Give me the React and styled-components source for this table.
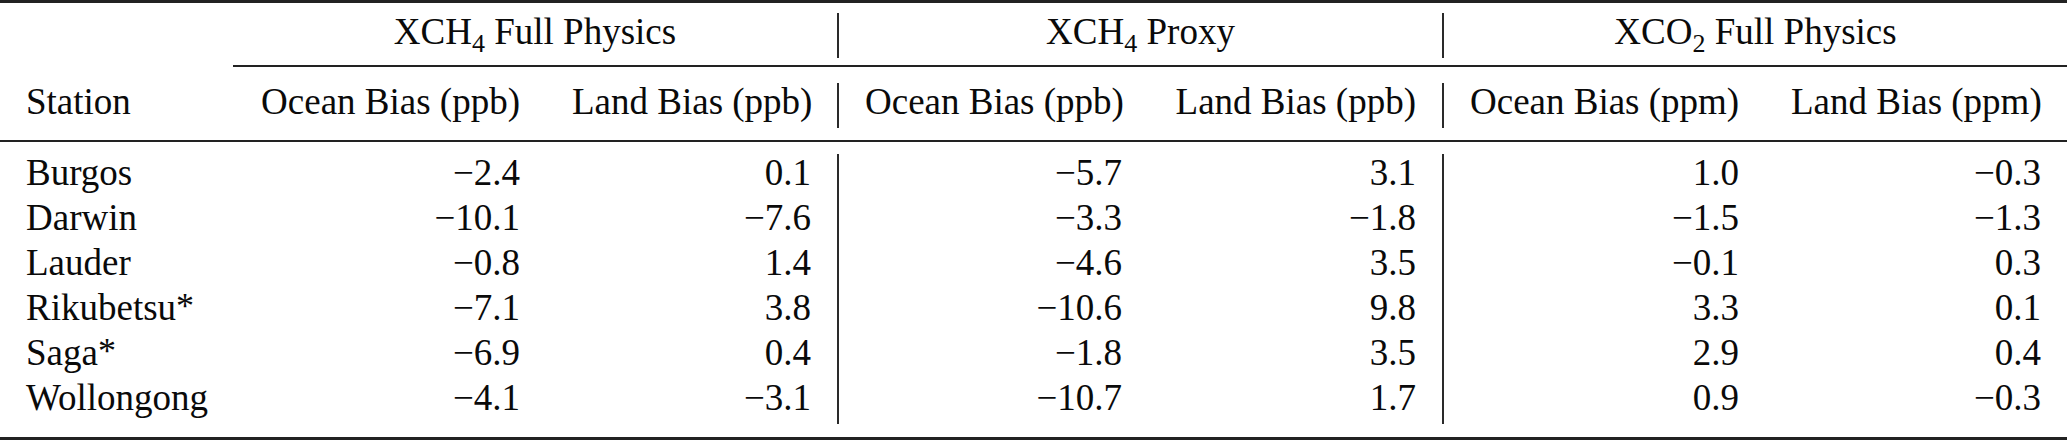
import React from "react";
import styled, { createGlobalStyle } from "styled-components";

const GlobalStyle = createGlobalStyle`
    html, body {
        margin: 0;
        padding: 0;
        background: #ffffff;
    }
    body {
        font-family: "Liberation Serif", "Times New Roman", serif;
        color: #0a0a0a;
    }
`;

const groups = [
    { base: "XCH", sub: "4", rest: " Full Physics" },
    { base: "XCH", sub: "4", rest: " Proxy" },
    { base: "XCO", sub: "2", rest: " Full Physics" },
];

const headers = [
    "Ocean Bias (ppb)",
    "Land Bias (ppb)",
    "Ocean Bias (ppb)",
    "Land Bias (ppb)",
    "Ocean Bias (ppm)",
    "Land Bias (ppm)",
];

const stations = [
    { name: "Burgos", star: false, values: ["−2.4", "0.1", "−5.7", "3.1", "1.0", "−0.3"] },
    { name: "Darwin", star: false, values: ["−10.1", "−7.6", "−3.3", "−1.8", "−1.5", "−1.3"] },
    { name: "Lauder", star: false, values: ["−0.8", "1.4", "−4.6", "3.5", "−0.1", "0.3"] },
    { name: "Rikubetsu", star: true, values: ["−7.1", "3.8", "−10.6", "9.8", "3.3", "0.1"] },
    { name: "Saga", star: true, values: ["−6.9", "0.4", "−1.8", "3.5", "2.9", "0.4"] },
    { name: "Wollongong", star: false, values: ["−4.1", "−3.1", "−10.7", "1.7", "0.9", "−0.3"] },
];

// a vertical rule sits before columns 4 and 6 (index 2 and 4 of the values)
const hasDivider = (i) => i === 2 || i === 4;

export default function App() {
    return (
        <>
            <GlobalStyle />
            <Table>
                <Rule $thick />
                <GridRow $top={10}>
                    <Cell />
                    {groups.map((g, i) => (
                        <GroupCell key={i} $divider={i > 0}>
                            {g.base}
                            <Sub>{g.sub}</Sub>
                            {g.rest}
                        </GroupCell>
                    ))}
                </GridRow>
                <Rule $top={7} $inset={233} />
                <GridRow $top={16}>
                    <Cell>Station</Cell>
                    {headers.map((h, i) => (
                        <Cell key={i} $right $divider={hasDivider(i)}>
                            {h}
                        </Cell>
                    ))}
                </GridRow>
                <Rule $top={12} />
                <Body>
                    {stations.map((s) => (
                        <GridRow key={s.name}>
                            <Cell>
                                {s.name}
                                {s.star && <Star>*</Star>}
                            </Cell>
                            {s.values.map((v, i) => (
                                <Cell key={i} $right $divider={hasDivider(i)}>
                                    {v}
                                </Cell>
                            ))}
                        </GridRow>
                    ))}
                </Body>
                <Rule $thick $top={13} />
            </Table>
        </>
    );
}

const Table = styled.div`
    width: 2067px;
    display: flex;
    flex-direction: column;
    font-size: 37px;
`;

const Rule = styled.div`
    height: ${(p) => (p.$thick ? 3 : 2)}px;
    margin-top: ${(p) => p.$top || 0}px;
    margin-left: ${(p) => p.$inset || 0}px;
    background-color: #222222;
`;

const GridRow = styled.div`
    display: grid;
    grid-template-columns: 233px 313px 291px 311px 294px 323px 302px;
    height: 45px;
    margin-top: ${(p) => p.$top || 0}px;
`;

const Body = styled.div`
    margin-top: 12px;
    display: flex;
    flex-direction: column;
`;

const Cell = styled.div`
    box-sizing: border-box;
    height: 45px;
    padding: 0 26px;
    line-height: 38px;
    white-space: nowrap;
    text-align: ${(p) => (p.$right ? "right" : "left")};
    border-left: ${(p) => (p.$divider ? "2px solid #2a2a2a" : "none")};
`;

const GroupCell = styled(Cell)`
    grid-column: span 2;
    text-align: center;
`;

const Sub = styled.span`
    font-size: 26px;
    line-height: 0;
    vertical-align: -8px;
`;

const Star = styled.span`
    font-size: 36px;
    line-height: 0;
    vertical-align: 2px;
`;
